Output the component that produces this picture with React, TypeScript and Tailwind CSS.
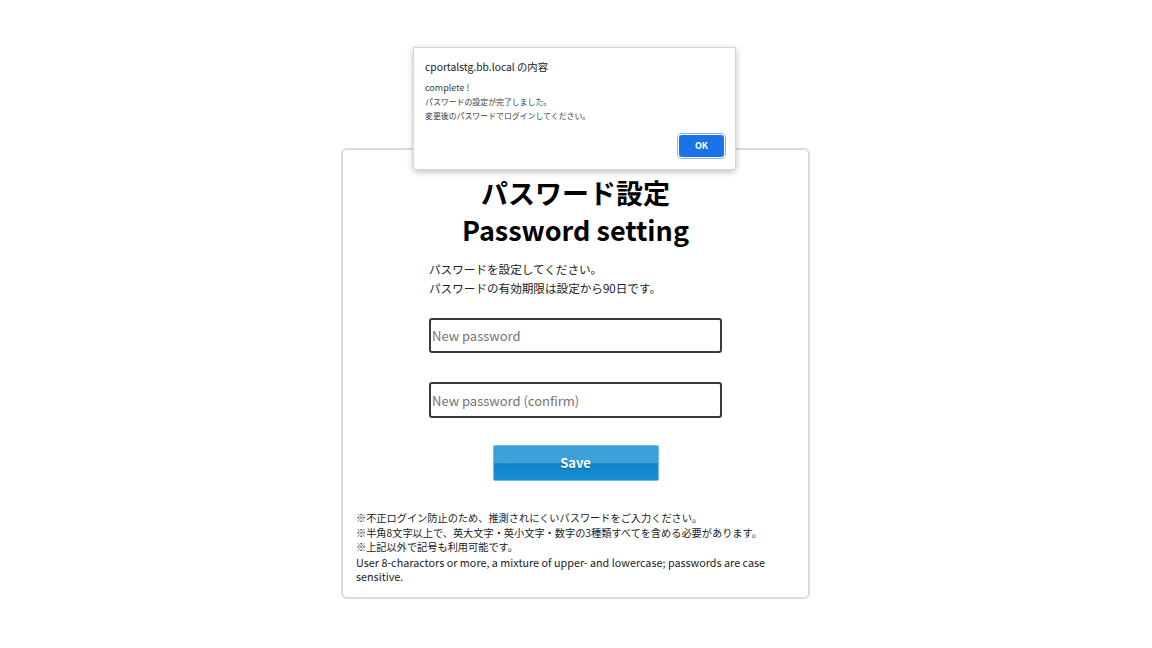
const jp = { fontFamily: '"Noto Sans CJK JP", "Noto Sans", sans-serif' }

function AlertDialog() {
  return (
    <div
      className="absolute left-[413px] top-[47px] w-[323px] h-[123px] bg-white border border-[#d6d6d6] rounded-b-[3px] shadow-[0_2px_6px_rgba(0,0,0,0.25)] px-[11px] pt-[12px]"
      style={jp}
    >
      <p className="text-[10.3px] leading-[14px] text-[#202124]">cportalstg.bb.local の内容</p>
      <div className="mt-[7px] text-[#3c4043]">
        <p className="text-[9px] leading-[14px]">complete !</p>
        <p className="text-[7.9px] leading-[14px]">パスワードの設定が完了しました。</p>
        <p className="text-[7.9px] leading-[14px]">変更後のパスワードでログインしてください。</p>
      </div>
      <div className="mt-[12px] flex justify-end">
        <button className="w-[45px] h-[22px] rounded-[3px] bg-[#1a73e8] ring-1 ring-[#8ab4f8] ring-offset-1 text-white text-[9px] font-bold">
          OK
        </button>
      </div>
    </div>
  )
}

export default function App() {
  return (
    <div className="relative w-[1152px] h-[648px] bg-white overflow-hidden" style={jp}>
      <div className="pt-[148px]">
        <div className="ml-[341px] w-[469px] h-[451px] border-2 border-[#dcdcdc] rounded-[6px] px-[13px] pt-[24px]">
          <h1 className="text-center text-[27px] leading-[37px] font-bold text-black">パスワード設定</h1>
          <h1 className="text-center text-[27px] leading-[37px] font-bold text-black">Password setting</h1>

          <div className="mx-auto w-[293px] mt-[12px]">
            <p className="text-[11.6px] leading-[19px] text-[#222]">パスワードを設定してください。</p>
            <p className="text-[11.6px] leading-[19px] text-[#222]">パスワードの有効期限は設定から90日です。</p>

            <input
              type="password"
              placeholder="New password"
              className="mt-[20px] block w-[293px] h-[35px] border-2 border-[#3a3a3a] rounded-[3px] px-[1px] text-[13px] placeholder:text-[#757575] outline-none"
            />
            <input
              type="password"
              placeholder="New password (confirm)"
              className="mt-[29px] block w-[293px] h-[36px] border-2 border-[#3a3a3a] rounded-[3px] px-[1px] text-[13px] placeholder:text-[#757575] outline-none"
            />

            <div className="mt-[27px] flex justify-center">
              <button className="w-[166px] h-[36px] rounded-[2px] border border-[#6dbde6] bg-[linear-gradient(#3ba1d8_0%,#3ba1d8_50%,#0c86cb_52%,#1a8fd1_100%)] text-white text-[13px] font-bold [text-shadow:0_1px_1px_rgba(0,0,0,0.35)]">
                Save
              </button>
            </div>
          </div>

          <div className="mt-[30px] text-[#222]">
            <p className="text-[10.2px] leading-[14.5px]">※不正ログイン防止のため、推測されにくいパスワードをご入力ください。</p>
            <p className="text-[10.2px] leading-[14.5px]">※半角8文字以上で、英大文字・英小文字・数字の3種類すべてを含める必要があります。</p>
            <p className="text-[10.2px] leading-[14.5px]">※上記以外で記号も利用可能です。</p>
            <p className="text-[10.8px] leading-[14px]">User 8-charactors or more, a mixture of upper- and lowercase; passwords are case sensitive.</p>
          </div>
        </div>
      </div>
      <AlertDialog />
    </div>
  )
}
